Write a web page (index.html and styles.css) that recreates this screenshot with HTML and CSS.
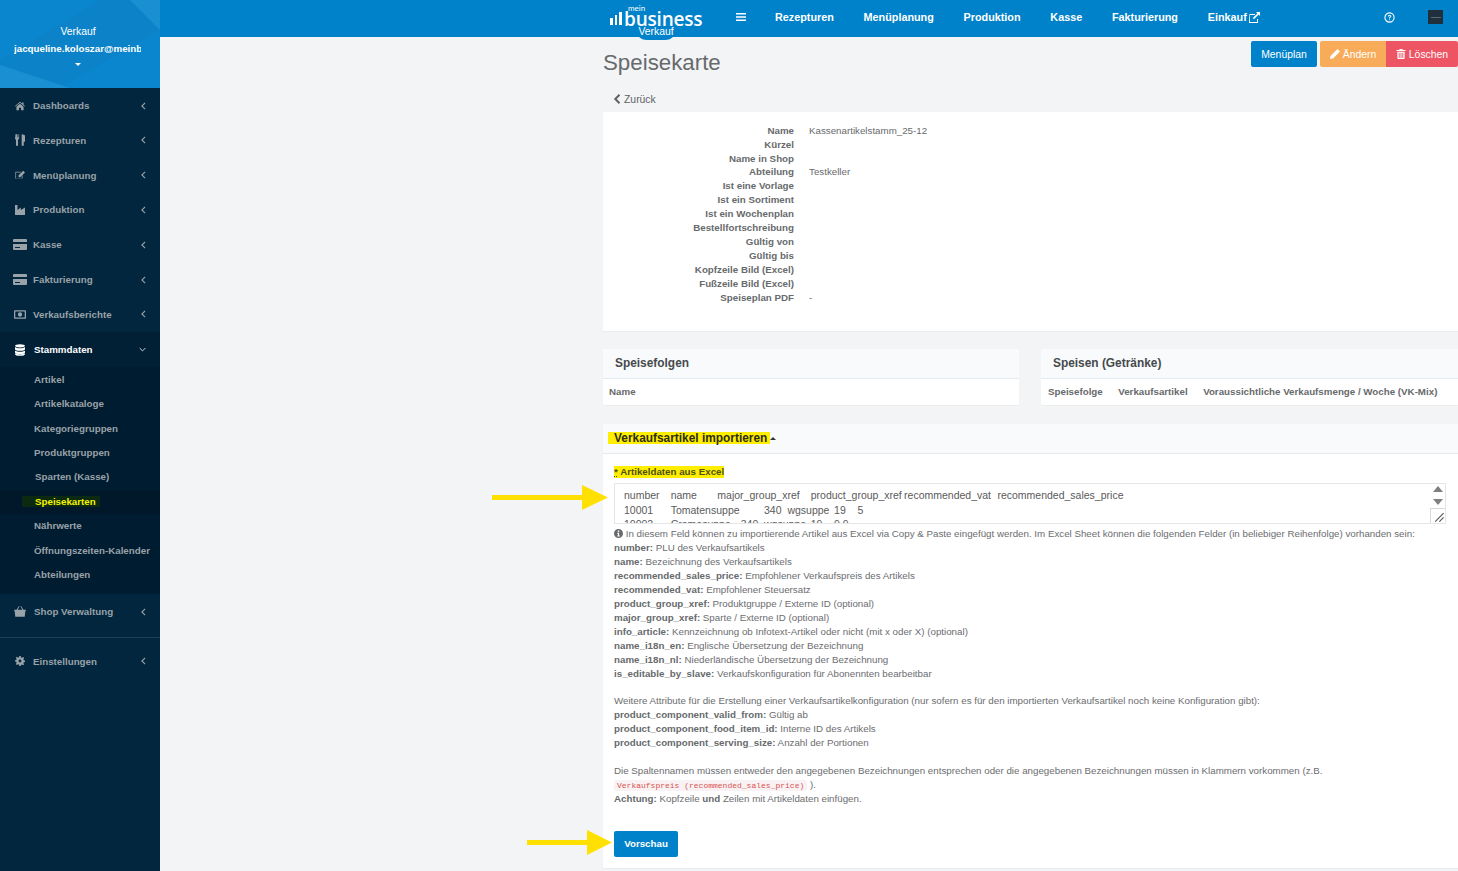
FILE: index.html
```html
<!DOCTYPE html>
<html lang="de">
<head>
<meta charset="utf-8">
<title>Speisekarte</title>
<link rel="stylesheet" href="styles.css">
</head>
<body>
<svg class="defs" width="0" height="0" aria-hidden="true">
  <symbol id="i-card" viewBox="0 0 14 11"><path d="M1 0h12a1 1 0 0 1 1 1v2H0V1a1 1 0 0 1 1-1zM0 5h14v5a1 1 0 0 1-1 1H1a1 1 0 0 1-1-1zm2 3v1h5V8z"/></symbol>
  <symbol id="i-chev" viewBox="0 0 6 10"><path d="M5 1 1 5l4 4" fill="none" stroke="currentColor" stroke-width="1.4"/></symbol>
</svg>
<aside class="sidebar">
  <div class="profile">
    <svg class="profile-bg" viewBox="0 0 160 88" preserveAspectRatio="none" aria-hidden="true">
      <polygon points="0,0 160,0 160,88 0,88" fill="#0a86cf"/>
      <polygon points="100,0 160,0 160,30 60,88 0,88 0,60" fill="#0c83c9"/>
      <polygon points="0,65 70,88 0,88" fill="#1a8fd2"/>
      <polygon points="130,0 160,0 160,30" fill="#1a8fd2"/>
    </svg>
    <div class="profile-role">Verkauf</div>
    <div class="profile-mail">jacqueline.koloszar@meinb</div>
    <div class="profile-caret"></div>
  </div>
  <nav class="menu">
    <a class="item"><svg class="ic" viewBox="0 0 14 12"><path d="M7 0 0 6l.7.8L7 1.500l6.300 5.300L14 6l-2-1.700V1h-2v1.600zM2 7.200V12h3.500V8.500h3V12H12V7.200L7 3z"/></svg><span class="label">Dashboards</span><svg class="chev"><use href="#i-chev"/></svg></a>
    <a class="item"><svg class="ic ic-tall" viewBox="0 0 12 14"><path d="M1 0v4H.7V0H.2L0 5c0 1 .8 1.500 1.200 1.700V14h2.400V6.700C4 6.500 5 6 5 5V0H4.300v4h-.5V0h-.6v4h-.6V0zM8 0v14h2.500V9H12V2c0-1-2-2-4-2z"/></svg><span class="label">Rezepturen</span><svg class="chev"><use href="#i-chev"/></svg></a>
    <a class="item"><svg class="ic ic-tall" viewBox="0 0 14 12"><path d="M1.500 1.500h7l-1 1h-6v8h8v-3l1-1v4.500h-10v-9.500zM11.500 0 14 2.500 7.500 9H5V6.500z"/></svg><span class="label">Menüplanung</span><svg class="chev"><use href="#i-chev"/></svg></a>
    <a class="item"><svg class="ic ic-tall" viewBox="0 0 12 12"><path d="M0 0h3v6l4-3v3l5-3v9H0z"/></svg><span class="label">Produktion</span><svg class="chev"><use href="#i-chev"/></svg></a>
    <a class="item"><svg class="ic ic-wide"><use href="#i-card"/></svg><span class="label">Kasse</span><svg class="chev"><use href="#i-chev"/></svg></a>
    <a class="item"><svg class="ic ic-wide"><use href="#i-card"/></svg><span class="label">Fakturierung</span><svg class="chev"><use href="#i-chev"/></svg></a>
    <a class="item"><svg class="ic ic-money" viewBox="0 0 14 10"><path fill-rule="evenodd" d="M1 0h12a1 1 0 0 1 1 1v8a1 1 0 0 1-1 1H1a1 1 0 0 1-1-1V1a1 1 0 0 1 1-1zm.5 1.500v7h11v-7zM7 2.500a2.500 2.500 0 1 1 0 5 2.500 2.500 0 0 1 0-5z"/></svg><span class="label">Verkaufsberichte</span><svg class="chev"><use href="#i-chev"/></svg></a>
    <a class="item item-open"><svg class="ic ic-tall" viewBox="1 0 12 14"><path d="M7 0c3.500 0 6 1 6 2s-2.500 2-6 2-6-1-6-2 2.500-2 6-2zM1 3.500C2 4.700 4.500 5 7 5s5-.3 6-1.500V6c0 1-2.500 2-6 2S1 7 1 6zm0 4C2 8.700 4.500 9 7 9s5-.3 6-1.500V10c0 1-2.500 2-6 2s-6-1-6-2zm0 3.500c1 1 3.500 1.300 6 1.300s5-.3 6-1.300v1c0 1-2.500 2-6 2s-6-1-6-2z"/></svg><span class="label">Stammdaten</span><svg class="chev-down" viewBox="0 0 10 6"><path d="M1 1l4 4 4-4" fill="none" stroke="currentColor" stroke-width="1.400"/></svg></a>
    <div class="submenu">
      <a class="sub">Artikel</a>
      <a class="sub">Artikelkataloge</a>
      <a class="sub">Kategoriegruppen</a>
      <a class="sub">Produktgruppen</a>
      <a class="sub sub-shift">Sparten (Kasse)</a>
      <a class="sub sub-active"><span class="sub-mark">Speisekarten</span></a>
      <a class="sub">Nährwerte</a>
      <a class="sub">Öffnungszeiten-Kalender</a>
      <a class="sub">Abteilungen</a>
    </div>
    <a class="item item-shop"><svg class="ic ic-wideish" viewBox="0 0 14 12"><path d="M0 4h14v1.200h-.7L12.500 12h-11L.7 5.200H0zM3 4l2.500-4h1L4.300 4zm8 0L8.500 0h-1l2.200 4z"/></svg><span class="label">Shop Verwaltung</span><svg class="chev"><use href="#i-chev"/></svg></a>
    <div class="menu-line"></div>
    <a class="item item-set"><svg class="ic" viewBox="0 0 14 14"><path fill-rule="evenodd" d="M6 0h2l.4 2 1.300.6 1.700-1.100 1.400 1.400-1.100 1.700.6 1.300 2 .4v2l-2 .4-.6 1.300 1.100 1.700-1.400 1.400-1.700-1.100-1.300.6L8 14H6l-.4-2-1.300-.6-1.700 1.100-1.400-1.400 1.100-1.700-.6-1.300-2-.4V6l2-.4.6-1.300-1.100-1.700 1.400-1.400 1.700 1.100 1.300-.6zM7 5a2 2 0 1 0 0 4 2 2 0 0 0 0-4z"/></svg><span class="label">Einstellungen</span><svg class="chev"><use href="#i-chev"/></svg></a>
  </nav>
</aside>
<div class="page">
  <header class="topbar">
    <div class="logo">
      <div class="logo-mark">
        <span class="bar bar-a"></span><span class="bar bar-b"></span><span class="bar bar-c"></span>
      </div>
      <span class="logo-mein">mein</span>
      <span class="logo-word">business</span>
      <span class="logo-tag">Verkauf</span>
    </div>
    <svg class="burger" viewBox="0 0 10 8"><path d="M0 0h10v1.600H0zM0 3.200h10v1.600H0zM0 6.400h10V8H0z"/></svg>
    <a class="top-link">Rezepturen</a>
    <a class="top-link">Menüplanung</a>
    <a class="top-link">Produktion</a>
    <a class="top-link">Kasse</a>
    <a class="top-link">Fakturierung</a>
    <a class="top-link">Einkauf<svg class="ext" viewBox="0 0 12 11"><path d="M8 0h4v4l-1.400-1.400L6 7.200 4.800 6l4.600-4.600zM1.500 2H7v1H2v7h7V7h1v4H1z"/></svg></a>
    <svg class="help" viewBox="0 0 12 12"><circle cx="6" cy="6" r="5" fill="none" stroke="#fff" stroke-width="1.200"/><path d="M4.200 4.800C4.200 2.600 7.900 2.700 7.900 4.700c0 1.400-1.500 1.300-1.500 2.500H5.400C5.400 5.500 6.800 5.600 6.800 4.700c0-.9-1.500-.9-1.500.1zM5.400 7.800h1v1.100h-1z" fill="#fff"/></svg>
    <div class="avatar"><span class="avatar-line"></span></div>
  </header>
  <main class="content">
    <div class="title-row">
      <h1 class="title">Speisekarte</h1>
      <div class="actions">
        <a class="btn btn-primary">Menüplan</a>
        <div class="btn-group">
          <a class="btn btn-warn"><svg class="btn-ic" viewBox="0 0 10 10"><path d="M7.500 0 10 2.500 3 9.500 0 10l.5-3z"/></svg>Ändern</a>
          <a class="btn btn-danger"><svg class="btn-ic" viewBox="0 0 10 11"><path d="M3.500 0h3l.5 1.200h3v1H0v-1h3zM1 3h8v7a1 1 0 0 1-1 1H2a1 1 0 0 1-1-1zm1.500 1.200v5.600h1V4.200zm2 0v5.600h1V4.200zm2 0v5.600h1V4.200z"/></svg>Löschen</a>
        </div>
      </div>
    </div>
    <a class="back"><svg class="back-ic" viewBox="0 0 7 10"><path d="M6 .8 1.800 5 6 9.200" fill="none" stroke="currentColor" stroke-width="2"/></svg>Zurück</a>
    <section class="card card-info">
      <dl class="info">
        <dt>Name</dt><dd>Kassenartikelstamm_25-12</dd>
        <dt>Kürzel</dt><dd></dd>
        <dt>Name in Shop</dt><dd></dd>
        <dt>Abteilung</dt><dd>Testkeller</dd>
        <dt>Ist eine Vorlage</dt><dd></dd>
        <dt>Ist ein Sortiment</dt><dd></dd>
        <dt>Ist ein Wochenplan</dt><dd></dd>
        <dt>Bestellfortschreibung</dt><dd></dd>
        <dt>Gültig von</dt><dd></dd>
        <dt>Gültig bis</dt><dd></dd>
        <dt>Kopfzeile Bild (Excel)</dt><dd></dd>
        <dt>Fußzeile Bild (Excel)</dt><dd></dd>
        <dt>Speiseplan PDF</dt><dd>-</dd>
      </dl>
    </section>
    <div class="two-cols">
      <section class="card card-left">
        <h2 class="card-head">Speisefolgen</h2>
        <div class="table-row"><span>Name</span></div>
      </section>
      <section class="card card-right">
        <h2 class="card-head">Speisen (Getränke)</h2>
        <div class="table-row"><span>Speisefolge</span><span>Verkaufsartikel</span><span>Voraussichtliche Verkaufsmenge / Woche (VK-Mix)</span></div>
      </section>
    </div>
    <section class="card card-import">
      <h2 class="card-head import-head"><span class="mark-head">Verkaufsartikel importieren</span><span class="caret-up"></span></h2>
      <div class="import-body">
        <label class="field-label"><span class="mark-label"><u class="star">*</u> Artikeldaten aus Excel</span></label>
        <div class="textarea">
          <div class="textarea-text">number	name	major_group_xref	product_group_xref	recommended_vat	recommended_sales_price
10001	Tomatensuppe	340	wgsuppe	19	5
10002	Cremesuppe	340	wgsuppe	19	9.9</div>
          <div class="scroll">
            <span class="scroll-up"></span>
            <span class="scroll-down"></span>
            <span class="resize"><svg viewBox="0 0 10 10"><path d="M9 3 3 9M9 6 6 9" stroke="#555" stroke-width=".8" fill="none"/></svg></span>
          </div>
        </div>
        <div class="help-text">
          <p><svg class="info-ic" viewBox="0 0 10 10"><path fill-rule="evenodd" d="M5 0a5 5 0 1 1 0 10A5 5 0 0 1 5 0zM4.200 1.800v1.500h1.600V1.800zM3.600 4.200v1h.7v2h-.7v1h2.800v-1h-.7V4.200z"/></svg> In diesem Feld können zu importierende Artikel aus Excel via Copy &amp; Paste eingefügt werden. Im Excel Sheet können die folgenden Felder (in beliebiger Reihenfolge) vorhanden sein:<br>
          <b>number:</b> PLU des Verkaufsartikels<br>
          <b>name:</b> Bezeichnung des Verkaufsartikels<br>
          <b>recommended_sales_price:</b> Empfohlener Verkaufspreis des Artikels<br>
          <b>recommended_vat:</b> Empfohlener Steuersatz<br>
          <b>product_group_xref:</b> Produktgruppe / Externe ID (optional)<br>
          <b>major_group_xref:</b> Sparte / Externe ID (optional)<br>
          <b>info_article:</b> Kennzeichnung ob Infotext-Artikel oder nicht (mit x oder X) (optional)<br>
          <b>name_i18n_en:</b> Englische Übersetzung der Bezeichnung<br>
          <b>name_i18n_nl:</b> Niederländische Übersetzung der Bezeichnung<br>
          <b>is_editable_by_slave:</b> Verkaufskonfiguration für Abonennten bearbeitbar</p>
          <p>Weitere Attribute für die Erstellung einer Verkaufsartikelkonfiguration (nur sofern es für den importierten Verkaufsartikel noch keine Konfiguration gibt):<br>
          <b>product_component_valid_from:</b> Gültig ab<br>
          <b>product_component_food_item_id:</b> Interne ID des Artikels<br>
          <b>product_component_serving_size:</b> Anzahl der Portionen</p>
          <div class="help-last">
            <div class="help-line">Die Spaltennamen müssen entweder den angegebenen Bezeichnungen entsprechen oder die angegebenen Bezeichnungen müssen in Klammern vorkommen (z.B.</div>
            <div class="help-line"><code>Verkaufspreis (recommended_sales_price)</code> ).</div>
            <div class="help-line"><b>Achtung:</b> Kopfzeile <b>und</b> Zeilen mit Artikeldaten einfügen.</div>
          </div>
        </div>
        <a class="btn btn-primary btn-preview">Vorschau</a>
      </div>
    </section>
  </main>
</div>
<svg class="arrow arrow-a" viewBox="0 0 116 25"><path d="M0 10h90V0l26 12.500L90 25V15H0z"/></svg>
<svg class="arrow arrow-b" viewBox="0 0 85 25"><path d="M0 10h60V0l25 12.500L60 25V15H0z"/></svg>
</body>
</html>
```
FILE: styles.css
```css
* { box-sizing: border-box; }
html, body { margin: 0; height: 100%; }
body {
  display: flex;
  height: 871px;
  overflow: hidden;
  font-family: "Liberation Sans", Arial, sans-serif;
  font-size: 9.750px;
  color: #676a6c;
  background: #f3f4f6;
  position: relative;
}
.defs { position: absolute; }

/* Sidebar */
.sidebar { width: 160px; flex: none; background: #01263d; color: #a7b1c2; }
.profile { position: relative; height: 88px; color: #fff; text-align: center; padding-top: 26px; overflow: hidden; }
.profile-bg { position: absolute; inset: 0; width: 100%; height: 100%; }
.profile-role, .profile-mail, .profile-caret { position: relative; }
.profile-role { font-size: 10.400px; line-height: 12px; margin-left: -4px; }
.profile-mail { font-weight: bold; font-size: 9.750px; line-height: 12px; margin-top: 5px; width: 127px; margin-left: 14px; overflow: hidden; white-space: nowrap; text-align: left; }
.profile-caret { width: 0; height: 0; margin: 8px 0 0 75px; border: 3px solid transparent; border-top-color: #fff; border-bottom: 0; }
.menu { display: flex; flex-direction: column; padding-top: .2px; }
.item { display: flex; align-items: center; height: 34.800px; padding: 0 14px 0 15px; font-weight: bold; font-size: 9.750px; color: #99a2a9; }
.ic { width: 10px; height: 10px; fill: #99a2a9; flex: none; margin-right: 8px; }
.ic-tall { height: 12px; }
.ic-wide { width: 14px; height: 11px; margin-left: -2px; margin-right: 6px; }
.ic-money { width: 12px; height: 9px; margin-left: -1px; margin-right: 7px; }
.ic-wideish { width: 12px; height: 11px; margin-left: -1px; margin-right: 8px; }
.label { flex: 1; white-space: nowrap; }
.chev { width: 5px; height: 8px; color: #99a2a9; flex: none; }
.item-open { background: #012036; color: #fff; height: 35px; padding-top: 1px; }
.item-open .ic { fill: #fff; }
.item-open .label { padding-left: 1px; }
.chev-down { width: 7px; height: 5px; color: #d5dade; flex: none; }
.submenu { background: #001c30; padding: 1px 0 7px; }
.sub { display: block; height: 24.400px; line-height: 24.400px; padding-left: 34px; font-weight: bold; font-size: 9.750px; color: #99a2a9; white-space: nowrap; }
.sub-shift { padding-left: 35px; }
.sub-active { background: #00182a; }
.sub-mark { display: inline-block; background: #0c2912; color: #f6f600; line-height: 11px; padding: 0 4px 0 13px; margin-left: -12px; }
.menu-line { height: 1px; background: #1e4057; margin-top: 8px; }
.item-set { margin-top: 6px; }

/* Top bar */
.page { flex: 1; min-width: 0; display: flex; flex-direction: column; }
.topbar { height: 37px; flex: none; background: #0082ca; display: flex; align-items: center; padding: 0 0 3px 450px; color: #fff; position: relative; font-weight: bold; }
.logo { position: relative; width: 92px; height: 34px; flex: none; }
.logo-mark { position: absolute; left: 0; top: 12px; display: flex; align-items: flex-end; gap: 2px; height: 13px; }
.bar { display: block; width: 2.500px; background: #fff; }
.bar-a { height: 7px; }
.bar-b { height: 10px; }
.bar-c { height: 13px; }
.logo-mein { position: absolute; left: 18px; top: 5px; font-family: Lato, sans-serif; font-weight: normal; font-size: 8px; line-height: 7px; }
.logo-word { position: absolute; left: 14px; top: 12px; font-family: "Open Sans", sans-serif; font-weight: 600; font-size: 19px; line-height: 14px; letter-spacing: -.2px; }
.logo-tag { position: absolute; left: 25px; top: 27px; width: 42px; height: 13px; border-radius: 0 0 12px 12px; background: #0082ca; font-weight: normal; font-size: 10.400px; line-height: 10px; text-align: center; z-index: 1; }
.burger { width: 10px; height: 8px; fill: #fff; margin-left: 34px; flex: none; }
.top-link { display: flex; align-items: center; margin-left: 29.800px; font-size: 10.800px; white-space: nowrap; }
.burger + .top-link { margin-left: 29px; }
.ext { width: 12px; height: 11px; fill: #fff; margin-left: 1px; }
.help { width: 11px; height: 11px; position: absolute; left: 1224px; top: 12px; }
.avatar { position: absolute; left: 1268px; top: 10px; width: 15px; height: 14px; background: #1f2f3b; display: flex; align-items: center; justify-content: center; }
.avatar-line { display: block; width: 10px; height: 1px; background: #5d6871; }

/* Content */
.content { flex: 1; padding-left: 443px; overflow: hidden; min-height: 0; }
.title-row { display: flex; justify-content: space-between; height: 52px; padding-top: 4px; }
.title { margin: 7px 0 0; font-weight: normal; font-size: 22.300px; line-height: 30px; color: #676a6c; }
.actions { display: flex; gap: 3px; height: 26px; }
.btn-group { display: flex; }
.btn { display: flex; align-items: center; justify-content: center; height: 26px; border-radius: 2px; font-size: 10.400px; color: #fff; white-space: nowrap; }
.btn-primary { width: 66px; background: #0082ca; }
.btn-warn { width: 66px; background: #f8ac59; border-radius: 2px 0 0 2px; }
.btn-danger { width: 72px; background: #ed5565; border-radius: 0 2px 2px 0; }
.btn-ic { width: 10px; height: 10px; fill: #fff; margin-right: 3px; }
.back { display: flex; align-items: center; height: 20px; margin: 0 0 3px 10px; font-size: 10.400px; color: #5f6264; }
.back-ic { width: 8px; height: 10px; margin-right: 3px; color: #5f6264; }
.card { background: #fff; box-shadow: 0 1px 1px rgba(0,0,0,.03); }
.card-info { height: 219px; padding-top: 11.650px; }
.info { display: grid; grid-template-columns: 191px 1fr; grid-auto-rows: 13.950px; column-gap: 15px; margin: 0; line-height: 13.950px; }
.info dt { text-align: right; font-weight: bold; }
.info dd { margin: 0; }
.two-cols { display: flex; gap: 22px; margin-top: 18px; }
.card-left { width: 416px; height: 56px; border-radius: 2px; }
.card-right { flex: 1; height: 56px; border-radius: 2px 0 0 2px; }
.card-head { margin: 0; height: 30px; padding: 0 12px; background: #f9fafb; border-bottom: 1px solid #e7eaec; font-size: 11.900px; line-height: 28px; color: #464a4d; font-weight: bold; }
.table-row { display: flex; gap: 16px; padding: 0 7px 1px 6px; height: 26px; align-items: center; font-weight: bold; font-size: 9.750px; color: #676a6c; }
.card-right .table-row { padding-left: 7px; gap: 15.500px; }
.card-import { height: 444px; margin-top: 19px; }
.import-head { display: flex; align-items: center; padding: 0 0 1px 5px; }
.mark-head { display: inline-block; background: #ffee00; color: #2d2d15; line-height: 12px; padding: 0 3px 0 6px; font-size: 11.900px; }
.caret-up { width: 0; height: 0; border: 3px solid transparent; border-bottom-color: #333; border-top: 0; }
.import-body { padding: 11px 12px 0 11px; }
.field-label { display: block; height: 13px; line-height: 13px; font-weight: bold; }
.mark-label { display: inline-block; background: #ffee00; color: #4c5010; height: 12px; line-height: 12px; }
.star { text-decoration: underline dotted; }
.textarea { display: flex; width: 832px; height: 41px; margin-top: 5px; border: 1px solid #e5e6e7; overflow: hidden; }
.textarea-text { flex: 1; white-space: pre; padding: 4px 9px 0; line-height: 14.500px; font-size: 10.500px; color: #5a5a5a; overflow: hidden; }
.scroll { width: 15px; flex: none; display: flex; flex-direction: column; align-items: center; position: relative; }
.scroll-up, .scroll-down { width: 0; height: 0; border: 5px solid transparent; }
.scroll-up { border-bottom: 6px solid #7f7f7f; border-top: 0; margin-top: 2px; }
.scroll-down { border-top: 6px solid #7f7f7f; border-bottom: 0; margin-top: 7px; }
.resize { position: absolute; right: 0; bottom: 0; width: 15px; height: 15px; border: 1px solid #d8d8d8; border-right: 0; border-bottom: 0; background: #fff; }
.resize svg { display: block; width: 14px; height: 14px; }
.help-text { margin-top: 3px; color: #6b6d6f; line-height: 13.950px; }
.help-text p { margin: 0 0 13.300px; white-space: nowrap; }
.help-text p + p { margin-bottom: 14px; }
.help-text b { color: #676a6c; }
.help-last { white-space: nowrap; }
.help-line { height: 14px; line-height: 14px; }
.info-ic { width: 9px; height: 9px; fill: #676a6c; vertical-align: -1px; }
code { font-family: "Liberation Mono", monospace; font-size: 8px; line-height: 10px; color: #d9534f; background: #f9f2f4; padding: 1px 3px; border-radius: 2px; }
.btn-preview { width: 64px; font-weight: bold; font-size: 9.750px; margin-top: 25px; }

/* Annotation arrows */
.arrow { position: absolute; fill: #ffe000; }
.arrow-a { left: 492px; top: 485px; width: 116px; height: 25px; }
.arrow-b { left: 527px; top: 830px; width: 85px; height: 25px; }
```
